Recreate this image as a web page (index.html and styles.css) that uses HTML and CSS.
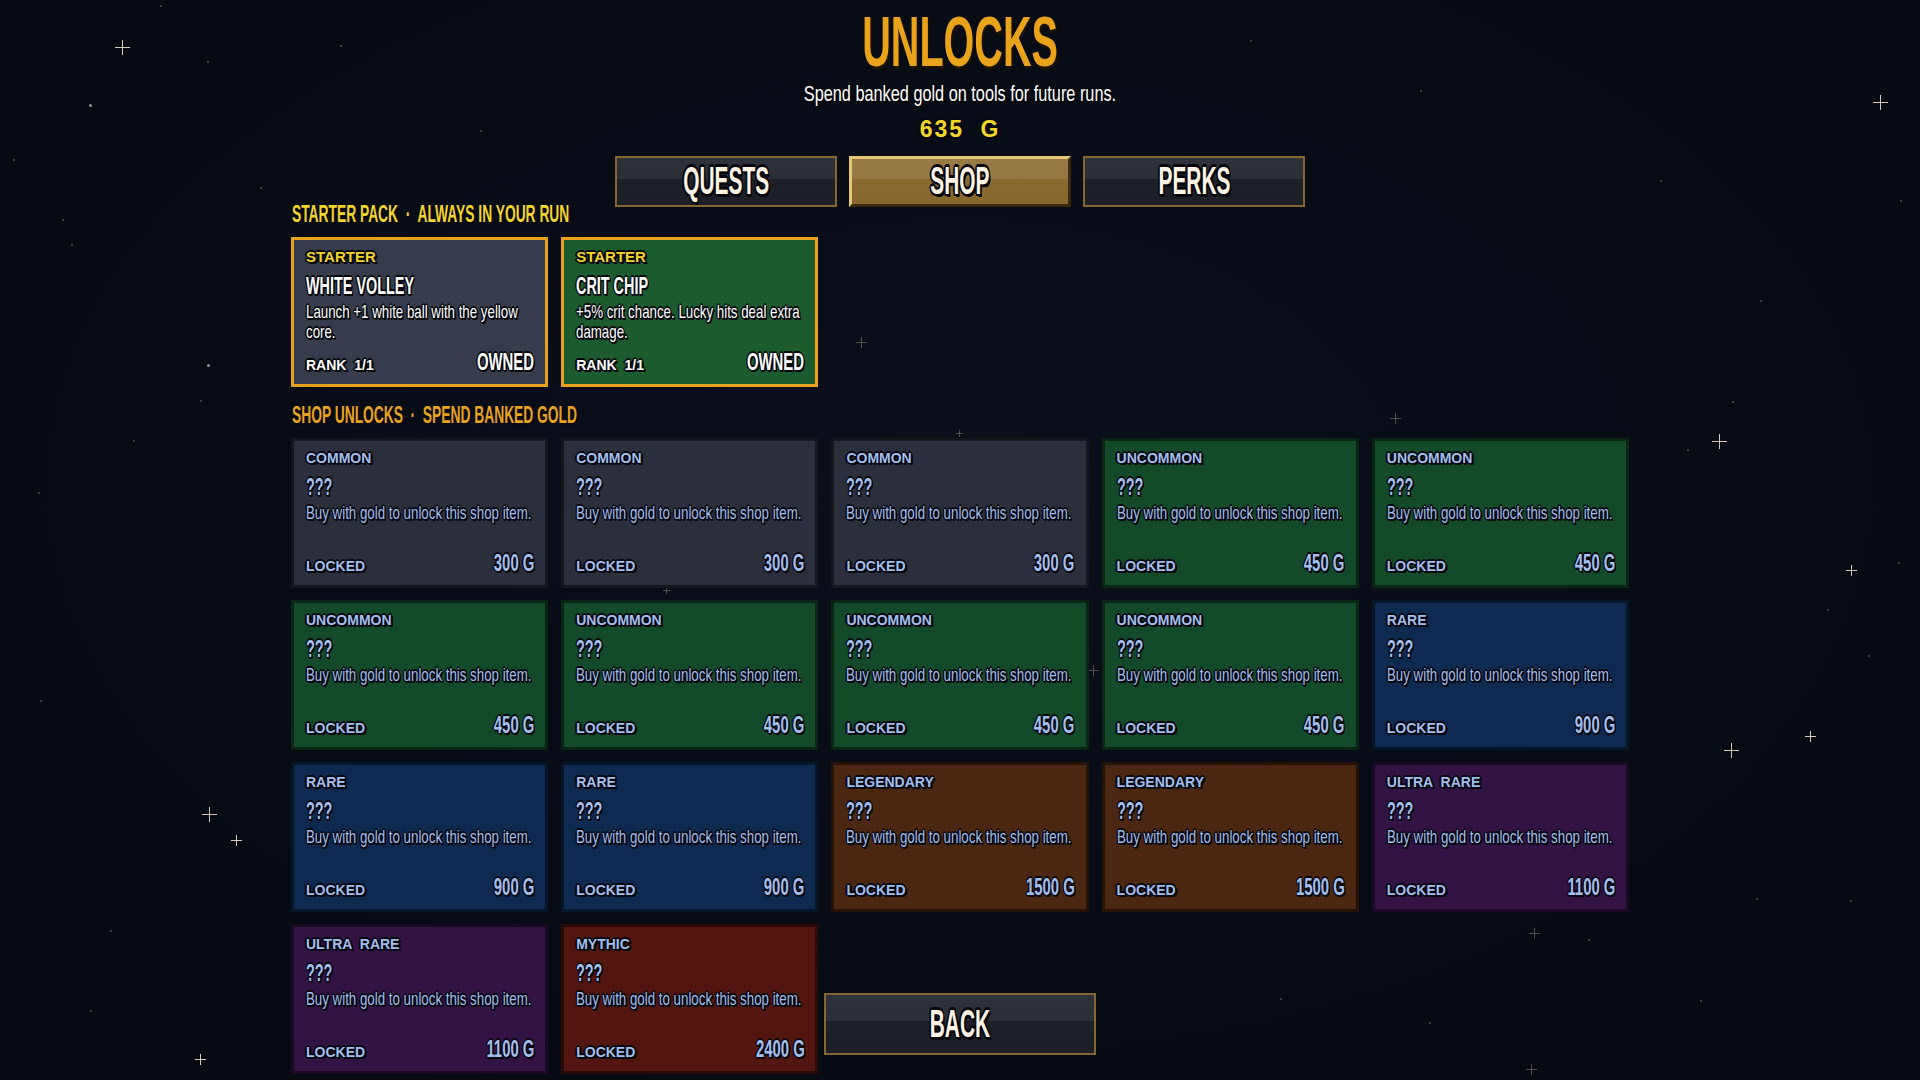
FILE: index.html
```html
<!DOCTYPE html>
<html lang="en">
<head>
    <meta charset="UTF-8">
    <meta name="viewport" content="width=device-width, initial-scale=1.0">
    <title>Unlocks</title>
    <link rel="stylesheet" href="styles.css">
</head>
<body>

    <!-- starfield behind the menu -->
    <div class="sky">
        <span class="star" style="left:122px;top:47px"></span>
        <span class="star" style="left:1880px;top:102px"></span>
        <span class="star sm dim" style="left:1395px;top:418px"></span>
        <span class="star" style="left:1719px;top:441px"></span>
        <span class="star sm" style="left:1851px;top:570px"></span>
        <span class="star" style="left:1731px;top:750px"></span>
        <span class="star sm" style="left:1810px;top:736px"></span>
        <span class="star" style="left:209px;top:814px"></span>
        <span class="star sm" style="left:236px;top:840px"></span>
        <span class="star sm dim" style="left:1093px;top:670px"></span>
        <span class="star sm dim" style="left:861px;top:342px"></span>
        <span class="star sm dim" style="left:1534px;top:933px"></span>
        <span class="star sm" style="left:200px;top:1059px"></span>
        <span class="star sm dim" style="left:1531px;top:1069px"></span>
        <span class="star xs dim" style="left:666px;top:590px"></span>
        <span class="star xs dim" style="left:959px;top:433px"></span>

        <span class="dot big" style="left:89px;top:104px"></span>
        <span class="dot big" style="left:207px;top:364px"></span>
        <span class="dot" style="left:160px;top:5px"></span>
        <span class="dot" style="left:207px;top:61px"></span>
        <span class="dot" style="left:13px;top:159px"></span>
        <span class="dot" style="left:340px;top:45px"></span>
        <span class="dot" style="left:62px;top:219px"></span>
        <span class="dot" style="left:71px;top:244px"></span>
        <span class="dot" style="left:260px;top:187px"></span>
        <span class="dot" style="left:200px;top:400px"></span>
        <span class="dot" style="left:38px;top:492px"></span>
        <span class="dot" style="left:133px;top:440px"></span>
        <span class="dot" style="left:1732px;top:401px"></span>
        <span class="dot" style="left:1687px;top:449px"></span>
        <span class="dot" style="left:1898px;top:562px"></span>
        <span class="dot" style="left:1827px;top:609px"></span>
        <span class="dot" style="left:1868px;top:655px"></span>
        <span class="dot" style="left:1588px;top:939px"></span>
        <span class="dot" style="left:1756px;top:898px"></span>
        <span class="dot" style="left:1429px;top:1022px"></span>
        <span class="dot" style="left:1280px;top:998px"></span>
        <span class="dot" style="left:1420px;top:90px"></span>
        <span class="dot" style="left:1660px;top:180px"></span>
        <span class="dot" style="left:1760px;top:300px"></span>
        <span class="dot" style="left:1900px;top:200px"></span>
        <span class="dot" style="left:480px;top:130px"></span>
        <span class="dot" style="left:1250px;top:40px"></span>
        <span class="dot" style="left:40px;top:700px"></span>
        <span class="dot" style="left:110px;top:930px"></span>
        <span class="dot" style="left:90px;top:1010px"></span>
        <span class="dot" style="left:1700px;top:1000px"></span>
        <span class="dot" style="left:1850px;top:900px"></span>
    </div>

    <main class="screen">
        <h1 class="title"><span class="sq">UNLOCKS</span></h1>
        <p class="subtitle"><span class="sq">Spend banked gold on tools for future runs.</span></p>
        <div class="gold">635 G</div>

        <nav class="tabs">
            <button class="tab"><span class="sq">QUESTS</span></button>
            <button class="tab active"><span class="sq">SHOP</span></button>
            <button class="tab"><span class="sq">PERKS</span></button>
        </nav>

        <h2 class="section-head starter-head"><span class="sq">STARTER PACK &nbsp;·&nbsp; ALWAYS IN YOUR RUN</span></h2>
        <div class="grid">
            <div class="card starter">
                <div class="rarity">STARTER</div>
                <div class="name"><span class="sq">WHITE VOLLEY</span></div>
                <div class="desc">Launch +1 white ball with the yellow core.</div>
                <div class="foot"><span class="state">RANK 1/1</span><span class="price"><span class="sq">OWNED</span></span></div>
            </div>
            <div class="card starter green">
                <div class="rarity">STARTER</div>
                <div class="name"><span class="sq">CRIT CHIP</span></div>
                <div class="desc">+5% crit chance. Lucky hits deal extra damage.</div>
                <div class="foot"><span class="state">RANK 1/1</span><span class="price"><span class="sq">OWNED</span></span></div>
            </div>
        </div>

        <h2 class="section-head shop-head"><span class="sq">SHOP UNLOCKS &nbsp;·&nbsp; SPEND BANKED GOLD</span></h2>
        <div class="grid">
            <div class="card common">
                <div class="rarity">COMMON</div>
                <div class="name"><span class="sq">???</span></div>
                <div class="desc">Buy with gold to unlock this shop item.</div>
                <div class="foot"><span class="state">LOCKED</span><span class="price"><span class="sq">300 G</span></span></div>
            </div>
            <div class="card common">
                <div class="rarity">COMMON</div>
                <div class="name"><span class="sq">???</span></div>
                <div class="desc">Buy with gold to unlock this shop item.</div>
                <div class="foot"><span class="state">LOCKED</span><span class="price"><span class="sq">300 G</span></span></div>
            </div>
            <div class="card common">
                <div class="rarity">COMMON</div>
                <div class="name"><span class="sq">???</span></div>
                <div class="desc">Buy with gold to unlock this shop item.</div>
                <div class="foot"><span class="state">LOCKED</span><span class="price"><span class="sq">300 G</span></span></div>
            </div>
            <div class="card uncommon">
                <div class="rarity">UNCOMMON</div>
                <div class="name"><span class="sq">???</span></div>
                <div class="desc">Buy with gold to unlock this shop item.</div>
                <div class="foot"><span class="state">LOCKED</span><span class="price"><span class="sq">450 G</span></span></div>
            </div>
            <div class="card uncommon">
                <div class="rarity">UNCOMMON</div>
                <div class="name"><span class="sq">???</span></div>
                <div class="desc">Buy with gold to unlock this shop item.</div>
                <div class="foot"><span class="state">LOCKED</span><span class="price"><span class="sq">450 G</span></span></div>
            </div>

            <div class="card uncommon">
                <div class="rarity">UNCOMMON</div>
                <div class="name"><span class="sq">???</span></div>
                <div class="desc">Buy with gold to unlock this shop item.</div>
                <div class="foot"><span class="state">LOCKED</span><span class="price"><span class="sq">450 G</span></span></div>
            </div>
            <div class="card uncommon">
                <div class="rarity">UNCOMMON</div>
                <div class="name"><span class="sq">???</span></div>
                <div class="desc">Buy with gold to unlock this shop item.</div>
                <div class="foot"><span class="state">LOCKED</span><span class="price"><span class="sq">450 G</span></span></div>
            </div>
            <div class="card uncommon">
                <div class="rarity">UNCOMMON</div>
                <div class="name"><span class="sq">???</span></div>
                <div class="desc">Buy with gold to unlock this shop item.</div>
                <div class="foot"><span class="state">LOCKED</span><span class="price"><span class="sq">450 G</span></span></div>
            </div>
            <div class="card uncommon">
                <div class="rarity">UNCOMMON</div>
                <div class="name"><span class="sq">???</span></div>
                <div class="desc">Buy with gold to unlock this shop item.</div>
                <div class="foot"><span class="state">LOCKED</span><span class="price"><span class="sq">450 G</span></span></div>
            </div>
            <div class="card rare">
                <div class="rarity">RARE</div>
                <div class="name"><span class="sq">???</span></div>
                <div class="desc">Buy with gold to unlock this shop item.</div>
                <div class="foot"><span class="state">LOCKED</span><span class="price"><span class="sq">900 G</span></span></div>
            </div>

            <div class="card rare">
                <div class="rarity">RARE</div>
                <div class="name"><span class="sq">???</span></div>
                <div class="desc">Buy with gold to unlock this shop item.</div>
                <div class="foot"><span class="state">LOCKED</span><span class="price"><span class="sq">900 G</span></span></div>
            </div>
            <div class="card rare">
                <div class="rarity">RARE</div>
                <div class="name"><span class="sq">???</span></div>
                <div class="desc">Buy with gold to unlock this shop item.</div>
                <div class="foot"><span class="state">LOCKED</span><span class="price"><span class="sq">900 G</span></span></div>
            </div>
            <div class="card legendary">
                <div class="rarity">LEGENDARY</div>
                <div class="name"><span class="sq">???</span></div>
                <div class="desc">Buy with gold to unlock this shop item.</div>
                <div class="foot"><span class="state">LOCKED</span><span class="price"><span class="sq">1500 G</span></span></div>
            </div>
            <div class="card legendary">
                <div class="rarity">LEGENDARY</div>
                <div class="name"><span class="sq">???</span></div>
                <div class="desc">Buy with gold to unlock this shop item.</div>
                <div class="foot"><span class="state">LOCKED</span><span class="price"><span class="sq">1500 G</span></span></div>
            </div>
            <div class="card ultra">
                <div class="rarity">ULTRA RARE</div>
                <div class="name"><span class="sq">???</span></div>
                <div class="desc">Buy with gold to unlock this shop item.</div>
                <div class="foot"><span class="state">LOCKED</span><span class="price"><span class="sq">1100 G</span></span></div>
            </div>

            <div class="card ultra">
                <div class="rarity">ULTRA RARE</div>
                <div class="name"><span class="sq">???</span></div>
                <div class="desc">Buy with gold to unlock this shop item.</div>
                <div class="foot"><span class="state">LOCKED</span><span class="price"><span class="sq">1100 G</span></span></div>
            </div>
            <div class="card mythic">
                <div class="rarity">MYTHIC</div>
                <div class="name"><span class="sq">???</span></div>
                <div class="desc">Buy with gold to unlock this shop item.</div>
                <div class="foot"><span class="state">LOCKED</span><span class="price"><span class="sq">2400 G</span></span></div>
            </div>
            <button class="tab back"><span class="sq">BACK</span></button>
        </div>
    </main>

</body>
</html>
```

FILE: styles.css
```css
* {
    margin: 0;
    padding: 0;
    box-sizing: border-box;
}

body {
    --ink: #05070c;
    --outline: -1px -1px 0 var(--ink), 1px -1px 0 var(--ink), -1px 1px 0 var(--ink), 1px 1px 0 var(--ink),
               0 -2px 0 var(--ink), -2px 0 0 var(--ink), 2px 1px 0 var(--ink), 1px 2px 0 var(--ink), 2px 2px 0 var(--ink);
    font-family: 'Liberation Sans', Arial, sans-serif;
    background-color: #070b13;
    color: #fff;
    height: 100vh;
    overflow: hidden;
    position: relative;
}

/* ---------- background ---------- */

.sky {
    position: absolute;
    inset: 0;
    background: radial-gradient(ellipse at 50% 45%, #0a0f1b 0%, #070b14 55%, #05080f 100%);
}

.star {
    position: absolute;
    width: 15px;
    height: 15px;
    margin: -7px 0 0 -7px;
}

.star::before,
.star::after {
    content: "";
    position: absolute;
    background-color: rgba(232, 222, 200, 0.9);
}

.star::before {
    left: 0;
    right: 0;
    top: 7px;
    height: 1px;
}

.star::after {
    top: 0;
    bottom: 0;
    left: 7px;
    width: 1px;
}

.star.sm {
    width: 11px;
    height: 11px;
    margin: -5px 0 0 -5px;
}

.star.sm::before { top: 5px; }
.star.sm::after { left: 5px; }

.star.xs {
    width: 7px;
    height: 7px;
    margin: -3px 0 0 -3px;
}

.star.xs::before { top: 3px; }
.star.xs::after { left: 3px; }

.star.dim {
    opacity: 0.35;
}

.dot {
    position: absolute;
    width: 2px;
    height: 2px;
    border-radius: 50%;
    background-color: #4c5262;
}

.dot.big {
    width: 3px;
    height: 3px;
    background-color: #8a8f9c;
}

/* ---------- layout ---------- */

.screen {
    position: relative;
    z-index: 1;
    width: 1338px;
    margin: 0 auto;
    padding-top: 7px;
}

/* squeezed text: the game font is a tall condensed face */
.sq {
    display: inline-block;
    white-space: nowrap;
    transform-origin: left center;
}

.title {
    text-align: center;
    font-size: 70px;
    line-height: 70px;
    font-weight: bold;
    color: #e8a31b;
}

.title .sq {
    transform: scaleX(0.565);
    transform-origin: center;
    text-shadow: 1px 1px 0 #1a1206, 2px 3px 0 #1a1206, 3px 3px 0 #1a1206;
}

.subtitle {
    text-align: center;
    font-size: 22px;
    line-height: 24px;
    margin-top: 5px;
    color: #fff;
}

.subtitle .sq {
    transform: scaleX(0.74);
    transform-origin: center;
    text-shadow: var(--outline);
}

.gold {
    text-align: center;
    font-size: 23px;
    line-height: 26px;
    font-weight: bold;
    color: #f3d62a;
    margin-top: 10px;
    letter-spacing: 2px;
    word-spacing: 8px;
    text-shadow: var(--outline);
}

/* ---------- tabs ---------- */

.tabs {
    display: flex;
    justify-content: center;
    gap: 12px;
    margin-top: 14px;
}

.tab {
    width: 222px;
    height: 51px;
    border: 2px solid #85672f;
    background: linear-gradient(#2e323b 0%, #2a2e37 44%, #1d2027 44%, #1c1f26 100%);
    color: #fff4e4;
    font-family: inherit;
    font-size: 38px;
    font-weight: bold;
    line-height: 47px;
    cursor: pointer;
    text-align: center;
}

.tab .sq {
    transform: scaleX(0.55);
    transform-origin: center;
    text-shadow: -2px -2px 0 var(--ink), 2px -2px 0 var(--ink), -2px 2px 0 var(--ink), 2px 2px 0 var(--ink),
                 0 -3px 0 var(--ink), -3px 0 0 var(--ink), 3px 3px 0 var(--ink);
}

.tab.active {
    border-width: 3px;
    border-color: #e6c677 #3a2a10 #3a2a10 #e6c677;
    background: linear-gradient(#987a45 0%, #957744 44%, #8a6a31 44%, #88682f 100%);
    line-height: 45px;
}

/* ---------- sections ---------- */

.section-head {
    font-size: 24px;
    line-height: 18px;
    font-weight: bold;
    padding-left: 1px;
}

.section-head .sq {
    transform: scaleX(0.575);
    text-shadow: 1px 1px 0 var(--ink), 2px 2px 0 var(--ink), -1px 0 0 var(--ink);
}

.starter-head {
    color: #f4d428;
    margin-top: -2px;
}

.shop-head {
    color: #e9a31c;
    margin-top: 19px;
}

.grid {
    display: grid;
    grid-template-columns: repeat(5, 1fr);
    gap: 12px 13px;
    margin-top: 14px;
}

/* ---------- cards ---------- */

.card {
    height: 150px;
    border: 3px solid rgba(0, 0, 0, 0.5);
    padding: 9px 11px 10px 12px;
    display: flex;
    flex-direction: column;
    color: #a3bfee;
    text-shadow: var(--outline);
}

.rarity,
.state {
    font-size: 14px;
    line-height: 16px;
    font-weight: bold;
    word-spacing: 4px;
}

.name {
    font-size: 24px;
    line-height: 26px;
    font-weight: bold;
    margin-top: 8px;
}

.name .sq {
    transform: scaleX(0.6);
}

.desc {
    font-size: 19px;
    line-height: 20px;
    margin-top: 3px;
    width: calc(100% / 0.7);
    transform: scaleX(0.7);
    transform-origin: left top;
}

.foot {
    margin-top: auto;
    display: flex;
    justify-content: space-between;
    align-items: baseline;
}

.price {
    font-size: 24px;
    line-height: 24px;
    font-weight: bold;
}

.price .sq {
    transform: scaleX(0.62);
    transform-origin: right center;
}

.common { background-color: #2a2f3b; }
.uncommon { background-color: #134a29; }
.rare { background-color: #0f2a50; }
.legendary { background-color: #4b2711; }
.ultra { background-color: #331344; }
.mythic { background-color: #53150f; }

.starter {
    border-color: #e9a21b;
    background-color: #363c4b;
    color: #fff;
}

.starter.green {
    background-color: #1b5b2e;
}

.starter .rarity {
    font-size: 15px;
    color: #f4d428;
}

.back {
    align-self: end;
    width: auto;
    height: 62px;
    margin: 0 -7px 19px;
    line-height: 58px;
}
```
